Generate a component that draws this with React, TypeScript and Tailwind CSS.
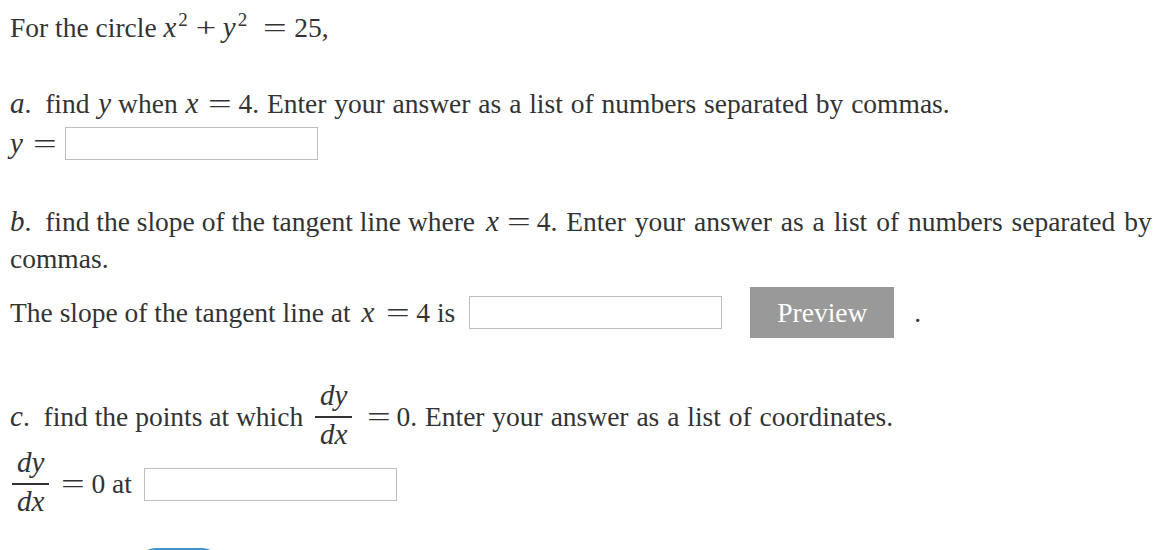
import React from "react";

const M = ({ children, l = 0, r = 0 }: { children: React.ReactNode; l?: number; r?: number }) => (
  <span
    className="italic font-['Liberation_Serif',serif] text-[29px]"
    style={{ marginLeft: l, marginRight: r }}
  >
    {children}
  </span>
);

const Op = ({ ch, w, l, r, s }: { ch: string; w: number; l: number; r: number; s: string }) => (
  <span
    className="inline-block text-center text-[28px]"
    style={{ width: w, marginLeft: l, marginRight: r }}
  >
    <span className={`inline-block ${s}`}>{ch}</span>
  </span>
);

const Eq = ({ l = 10, r = 6 }: { l?: number; r?: number }) => (
  <Op ch="=" w={24} l={l} r={r} s="scale-x-[1.5]" />
);

const Frac = () => (
  <span className="inline-flex flex-col items-center align-middle">
    <span className="px-[5px] pb-[5px] leading-[32px] italic text-[29px]">dy</span>
    <span className="h-[2px] w-full bg-[#333]" />
    <span className="px-[5px] pb-[5px] leading-[32px] italic text-[29px]">dx</span>
  </span>
);

const Input = () => (
  <div className="w-[253px] h-[33px] border border-[#bdbdbd] bg-white shrink-0" />
);

export default function App() {
  return (
    <div className="w-[1162px] h-[550px] overflow-hidden bg-white text-[#333] text-[27.5px] font-['Liberation_Serif',serif] px-[10px]">
      <div className="mt-[8px] h-[38px] leading-[38px] whitespace-pre">
        For the circle <M>x</M>
        <sup className="text-[19px] -top-[0.6em] ml-[2px]">2</sup>
        <Op ch="+" w={20} l={8} r={7} s="scale-x-[1.3]" />
        <M>y</M>
        <sup className="text-[19px] -top-[0.6em] ml-[2px]">2</sup>
        <Eq l={16} r={7} />
        25,
      </div>

      <div className="mt-[38px] h-[38px] leading-[38px] whitespace-pre">
        <M>a</M>.{"  "}find <M l={2}>y</M> when <M l={1}>x</M>
        <Eq />
        <span className="[word-spacing:1px]">
          4. Enter your answer as a list of numbers separated by commas.
        </span>
      </div>

      <div className="mt-[5px] h-[33px] flex items-center whitespace-pre">
        <span>
          <M>y</M>
          <Eq l={10} r={0} />
        </span>
        <span className="w-[8px]" />
        <Input />
      </div>

      <div className="mt-[42px]">
        <div className="h-[38px] leading-[38px] whitespace-pre">
          <M>b</M>.{"  "}find the slope of the tangent line where <M l={4}>x</M>
          <Eq l={8} r={6} />
          <span className="[word-spacing:2px]">
            4. Enter your answer as a list of numbers separated by
          </span>
        </div>
        <div className="h-[38px] leading-[38px]">commas.</div>
      </div>

      <div className="mt-[9px] h-[51px] flex items-center whitespace-pre">
        <span>
          The slope of the tangent line at <M l={4}>x</M>
          <Eq l={12} />
          4 is
        </span>
        <span className="w-[14px]" />
        <Input />
        <button className="ml-[28px] w-[144px] h-[51px] bg-[#999999] text-white text-[27.5px] font-['Liberation_Serif',serif]">
          Preview
        </button>
        <span className="ml-[20px]">.</span>
      </div>

      <div className="mt-[46px] h-[66px] flex items-center whitespace-pre">
        <span>
          <M>c</M>.{"  "}find the points at which{" "}
        </span>
        <span className="w-[5px]" />
        <Frac />
        <span className="[word-spacing:1px]">
          <Eq l={14} />
          0. Enter your answer as a list of coordinates.
        </span>
      </div>

      <div className="mt-[1px] h-[66px] flex items-center whitespace-pre">
        <span className="w-[2px]" />
        <Frac />
        <span>
          <Eq l={12} />
          0 at
        </span>
        <span className="w-[12px]" />
        <Input />
      </div>

      <div className="mt-[31px] ml-[126px] w-[86px] h-[40px] rounded-[20px] bg-[#4192c6]" />
    </div>
  );
}
